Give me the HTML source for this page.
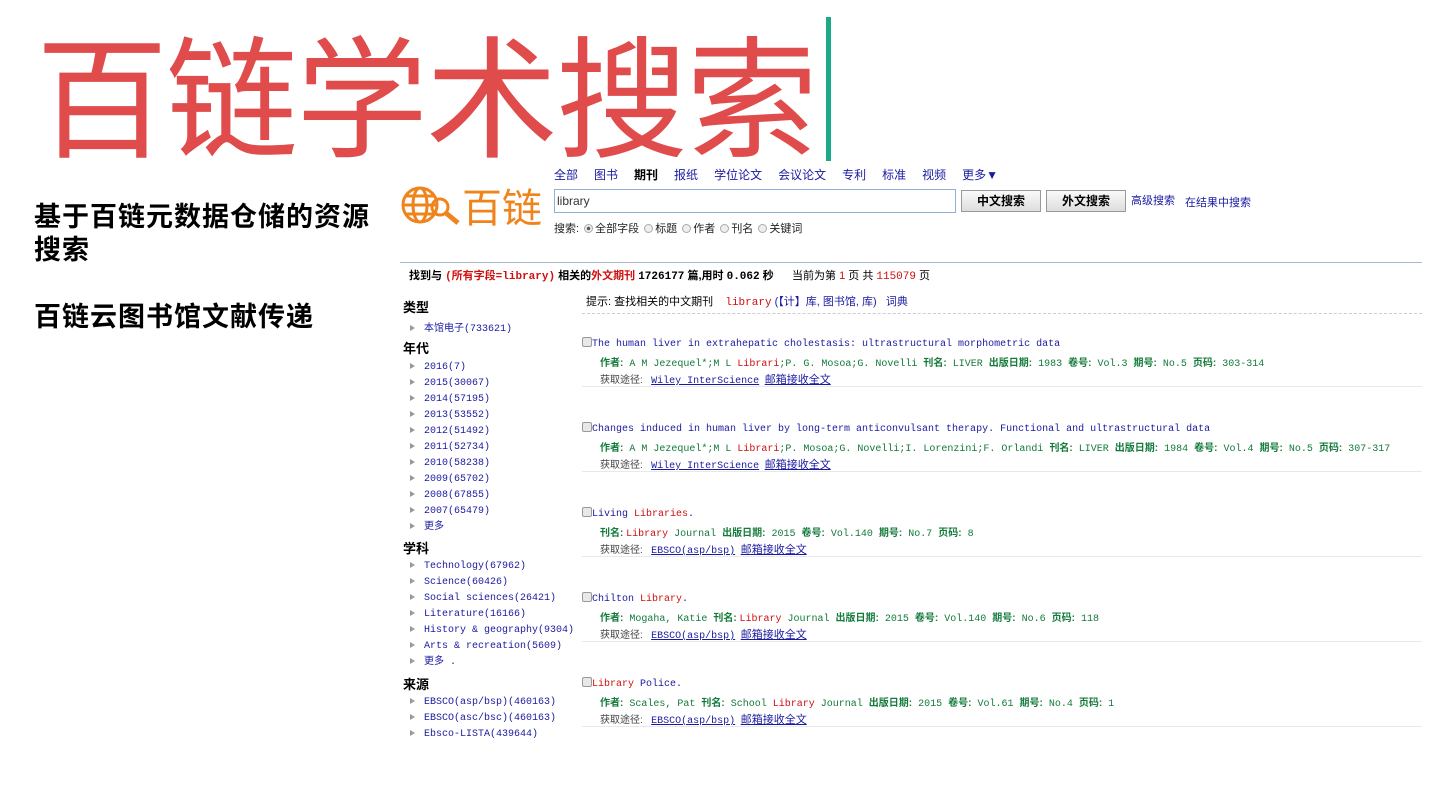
<!DOCTYPE html>
<html><head><meta charset="utf-8">
<style>
*{margin:0;padding:0;box-sizing:border-box}
body{width:1440px;height:810px;background:#fff;position:relative;overflow:hidden;font-family:"Liberation Sans","Noto Sans CJK SC",sans-serif}
.a{position:absolute;white-space:nowrap}
.m{font-family:"Liberation Mono","Noto Sans CJK SC",monospace}
.b{color:#1a1aa0}
.r{color:#d01010}
.g{color:#137a3a}
.gb{color:#137a3a;font-weight:bold}
.s{font-size:10px}
.u{text-decoration:underline}
.cb{display:inline-block;width:10px;height:10px;border:1px solid #999;background:#e8e8e8;border-radius:2px;vertical-align:-1px}
.rad{display:inline-block;width:9px;height:9px;border:1px solid #aaa;border-radius:50%;background:#eee;vertical-align:-1px;margin:0 2px}
.tri{display:inline-block;width:0;height:0;border-left:5px solid #999;border-top:3px solid transparent;border-bottom:3px solid transparent;margin-right:9px}
.hl{position:absolute;left:582px;width:840px;border-top:1px solid #e8e8e8}
.nav span{margin-right:16px}
</style></head><body>
<div class="a" style="left:36px;top:6px;font-size:132px;line-height:170px;color:#e04b4b;font-family:'Noto Sans CJK SC',sans-serif;letter-spacing:-2px">百链学术搜索</div>
<div class="a" style="left:826px;top:17px;width:5px;height:144px;background:#1aaa8a"></div>

<div class="a" style="left:34px;top:198px;font-size:27px;letter-spacing:1px;font-weight:bold;line-height:33px;white-space:normal;width:345px;font-family:'Noto Sans CJK SC',sans-serif">基于百链元数据仓储的资源搜索</div>
<div class="a" style="left:34px;top:295px;font-size:27px;letter-spacing:1px;font-weight:bold;font-family:'Noto Sans CJK SC',sans-serif">百链云图书馆文献传递</div>

<svg class="a" style="left:400px;top:185px" width="65" height="42" viewBox="0 0 65 42">
<g fill="none" stroke="#f0841c" stroke-width="3"><circle cx="20" cy="20" r="17"/><ellipse cx="20" cy="20" rx="7" ry="17"/><line x1="3" y1="20" x2="37" y2="20"/><line x1="6" y1="11" x2="34" y2="11"/><line x1="6" y1="29" x2="34" y2="29"/><circle cx="40" cy="22" r="8"/><line x1="46" y1="28" x2="58" y2="38" stroke-width="5"/></g></svg>
<div class="a" style="left:462px;top:180px;font-size:40px;color:#f0841c;font-family:'Noto Sans CJK SC',sans-serif;line-height:50px">百链</div>

<div class="a b nav" style="left:554px;top:166px;font-size:12px"><span>全部</span><span>图书</span><span style="color:#000;font-weight:bold">期刊</span><span>报纸</span><span>学位论文</span><span>会议论文</span><span>专利</span><span>标准</span><span>视频</span>更多▼</div>
<div class="a" style="left:554px;top:189px;width:402px;height:24px;border:1px solid #8fb0d8;font-size:12px;padding:4px 2px;color:#333">library</div>
<div class="a" style="left:961px;top:190px;width:80px;height:22px;border:1px solid #999;background:linear-gradient(#fafafa,#ddd);font-size:12px;font-weight:bold;text-align:center;line-height:20px">中文搜索</div>
<div class="a" style="left:1046px;top:190px;width:80px;height:22px;border:1px solid #999;background:linear-gradient(#fafafa,#ddd);font-size:12px;font-weight:bold;text-align:center;line-height:20px">外文搜索</div>
<div class="a b" style="left:1131px;top:192px;font-size:11px">高级搜索</div>
<div class="a b" style="left:1185px;top:194px;font-size:11px">在结果中搜索</div>
<div class="a" style="left:554px;top:220px;font-size:11px;color:#222">搜索: <span class="rad" style="background:radial-gradient(#555 30%,#eee 40%)"></span>全部字段 <span class="rad"></span>标题 <span class="rad"></span>作者 <span class="rad"></span>刊名 <span class="rad"></span>关键词</div>

<div class="a" style="left:400px;top:262px;width:1022px;border-top:1px solid #a8b8c8"></div>
<div class="a" style="left:409px;top:267px;font-size:11px"><b>找到与 <span class="r m">(所有字段=library)</span> 相关的<span class="r">外文期刊</span> <span class="m">1726177</span> 篇,用时 <span class="m">0.062</span> 秒</b>&nbsp;&nbsp;&nbsp;&nbsp;&nbsp; 当前为第 <span class="r">1</span> 页 共 <span class="r m">115079</span> 页</div>

<div class="a" style="left:403px;top:297px;font-size:13px;font-weight:bold">类型</div>
<div class="a s b" style="left:410px;top:319px"><span class="tri"></span>本馆电子<span class="m">(733621)</span></div>
<div class="a" style="left:403px;top:338px;font-size:13px;font-weight:bold">年代</div>
<div class="a s b m" style="left:410px;top:360px;line-height:16px"><span class="tri"></span>2016(7)<br><span class="tri"></span>2015(30067)<br><span class="tri"></span>2014(57195)<br><span class="tri"></span>2013(53552)<br><span class="tri"></span>2012(51492)<br><span class="tri"></span>2011(52734)<br><span class="tri"></span>2010(58238)<br><span class="tri"></span>2009(65702)<br><span class="tri"></span>2008(67855)<br><span class="tri"></span>2007(65479)<br><span class="tri"></span>更多</div>
<div class="a" style="left:403px;top:538px;font-size:13px;font-weight:bold">学科</div>
<div class="a s b m" style="left:410px;top:559px;line-height:16px"><span class="tri"></span>Technology(67962)<br><span class="tri"></span>Science(60426)<br><span class="tri"></span>Social sciences(26421)<br><span class="tri"></span>Literature(16166)<br><span class="tri"></span>History &amp; geography(9304)<br><span class="tri"></span>Arts &amp; recreation(5609)<br><span class="tri"></span>更多 .</div>
<div class="a" style="left:403px;top:674px;font-size:13px;font-weight:bold">来源</div>
<div class="a s b m" style="left:410px;top:695px;line-height:16px"><span class="tri"></span>EBSCO(asp/bsp)(460163)<br><span class="tri"></span>EBSCO(asc/bsc)(460163)<br><span class="tri"></span>Ebsco-LISTA(439644)</div>

<div class="a" style="left:586px;top:293px;font-size:11px">提示: 查找相关的中文期刊&nbsp;&nbsp;&nbsp; <span class="r m">library</span> <span class="b">(【计】库, 图书馆, 库)&nbsp;&nbsp; 词典</span></div>
<div class="a" style="left:582px;top:313px;width:840px;border-top:1px dashed #ccc"></div>

<div class="a s m" style="left:582px;top:337px"><span class="cb"></span><span class="b">The human liver in extrahepatic cholestasis: ultrastructural morphometric data</span></div>
<div class="a s" style="left:600px;top:354px"><span class="gb">作者:</span><span class="g m"> A M Jezequel*;M L </span><span class="r m">Librari</span><span class="g m">;P. G. Mosoa;G. Novelli </span><span class="gb">刊名:</span><span class="g m"> LIVER </span><span class="gb">出版日期:</span><span class="g m"> 1983 </span><span class="gb">卷号:</span><span class="g m"> Vol.3 </span><span class="gb">期号:</span><span class="g m"> No.5 </span><span class="gb">页码:</span><span class="g m"> 303-314</span></div>
<div class="a s" style="left:600px;top:371px;color:#444">获取途径:&nbsp;&nbsp; <span class="b u m">Wiley InterScience</span>&nbsp; <span class="b u" style="font-size:11px">邮箱接收全文</span></div>
<div class="hl" style="top:386px"></div>

<div class="a s m" style="left:582px;top:422px"><span class="cb"></span><span class="b">Changes induced in human liver by long-term anticonvulsant therapy. Functional and ultrastructural data</span></div>
<div class="a s" style="left:600px;top:439px"><span class="gb">作者:</span><span class="g m"> A M Jezequel*;M L </span><span class="r m">Librari</span><span class="g m">;P. Mosoa;G. Novelli;I. Lorenzini;F. Orlandi </span><span class="gb">刊名:</span><span class="g m"> LIVER </span><span class="gb">出版日期:</span><span class="g m"> 1984 </span><span class="gb">卷号:</span><span class="g m"> Vol.4 </span><span class="gb">期号:</span><span class="g m"> No.5 </span><span class="gb">页码:</span><span class="g m"> 307-317</span></div>
<div class="a s" style="left:600px;top:456px;color:#444">获取途径:&nbsp;&nbsp; <span class="b u m">Wiley InterScience</span>&nbsp; <span class="b u" style="font-size:11px">邮箱接收全文</span></div>
<div class="hl" style="top:471px"></div>

<div class="a s m" style="left:582px;top:507px"><span class="cb"></span><span class="b">Living </span><span class="r">Libraries</span><span class="b">.</span></div>
<div class="a s" style="left:600px;top:524px"><span class="gb">刊名:</span> <span class="r m">Library</span><span class="g m"> Journal </span><span class="gb">出版日期:</span><span class="g m"> 2015 </span><span class="gb">卷号:</span><span class="g m"> Vol.140 </span><span class="gb">期号:</span><span class="g m"> No.7 </span><span class="gb">页码:</span><span class="g m"> 8</span></div>
<div class="a s" style="left:600px;top:541px;color:#444">获取途径:&nbsp;&nbsp; <span class="b u m">EBSCO(asp/bsp)</span>&nbsp; <span class="b u" style="font-size:11px">邮箱接收全文</span></div>
<div class="hl" style="top:556px"></div>

<div class="a s m" style="left:582px;top:592px"><span class="cb"></span><span class="b">Chilton </span><span class="r">Library</span><span class="b">.</span></div>
<div class="a s" style="left:600px;top:609px"><span class="gb">作者:</span><span class="g m"> Mogaha, Katie </span><span class="gb">刊名:</span> <span class="r m">Library</span><span class="g m"> Journal </span><span class="gb">出版日期:</span><span class="g m"> 2015 </span><span class="gb">卷号:</span><span class="g m"> Vol.140 </span><span class="gb">期号:</span><span class="g m"> No.6 </span><span class="gb">页码:</span><span class="g m"> 118</span></div>
<div class="a s" style="left:600px;top:626px;color:#444">获取途径:&nbsp;&nbsp; <span class="b u m">EBSCO(asp/bsp)</span>&nbsp; <span class="b u" style="font-size:11px">邮箱接收全文</span></div>
<div class="hl" style="top:641px"></div>

<div class="a s m" style="left:582px;top:677px"><span class="cb"></span><span class="r">Library</span><span class="b"> Police.</span></div>
<div class="a s" style="left:600px;top:694px"><span class="gb">作者:</span><span class="g m"> Scales, Pat </span><span class="gb">刊名:</span><span class="g m"> School </span><span class="r m">Library</span><span class="g m"> Journal </span><span class="gb">出版日期:</span><span class="g m"> 2015 </span><span class="gb">卷号:</span><span class="g m"> Vol.61 </span><span class="gb">期号:</span><span class="g m"> No.4 </span><span class="gb">页码:</span><span class="g m"> 1</span></div>
<div class="a s" style="left:600px;top:711px;color:#444">获取途径:&nbsp;&nbsp; <span class="b u m">EBSCO(asp/bsp)</span>&nbsp; <span class="b u" style="font-size:11px">邮箱接收全文</span></div>
<div class="hl" style="top:726px"></div>
</body></html>
